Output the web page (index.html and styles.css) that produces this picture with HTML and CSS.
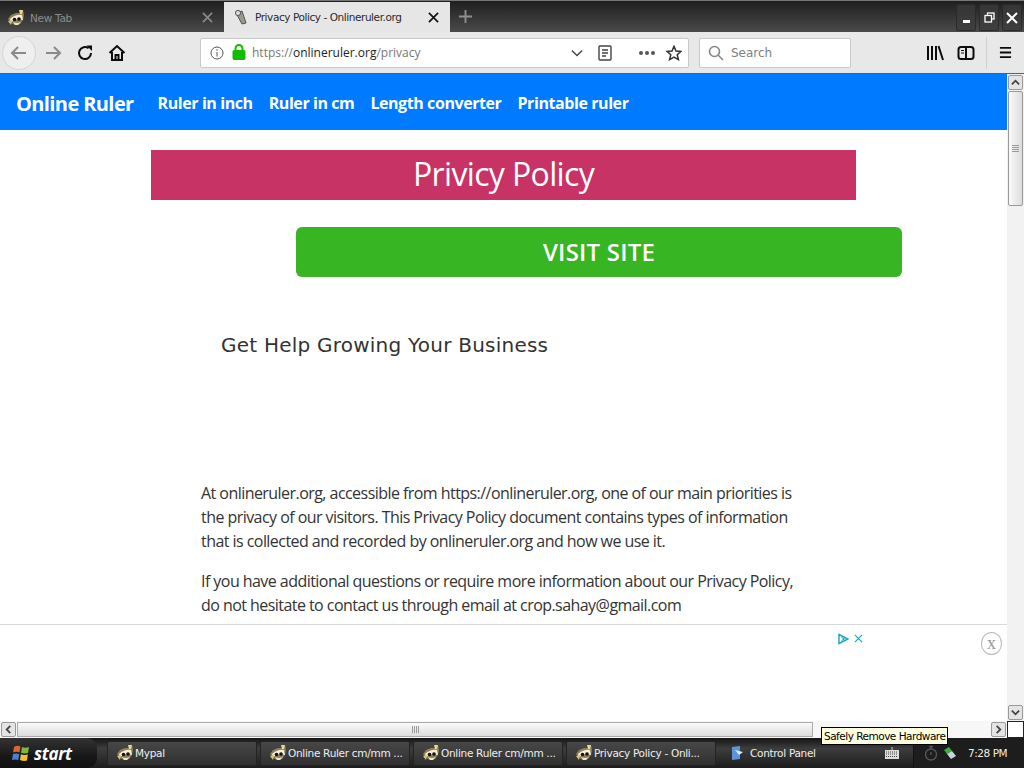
FILE: index.html
```html
<!DOCTYPE html>
<html lang="en">

<head>
  <meta charset="UTF-8">
  <title>Privacy Policy - Onlineruler.org</title>
  <link rel="stylesheet" href="styles.css">
</head>

<body>
  <svg class="defs" width="0" height="0">
    <symbol id="mypal" viewBox="0 0 16 16">
      <path d="M0 9 L3 5 L8 3 L12 3 L15 0 L16 5 L15 10 L12 14 L7 15 L3 13 Z" fill="#8f7f58" />
      <path d="M2 9 Q8 4 14 5 L15 10 Q8 8 3 12 Z" fill="#f4eeda" />
      <circle cx="6.500" cy="9.500" r="1.800" fill="#14120d" />
      <circle cx="11" cy="9" r="1.800" fill="#14120d" />
      <path d="M5 12 Q9 14 13 12 L10 15 L7 15 Z" fill="#efe7cc" />
      <path d="M11 0 L15 0 L14 4 L12 4 Z" fill="#e8d98f" />
      <path d="M0 11 L4 10 L3 15 Z" fill="#d6c484" />
    </symbol>
  </svg>

  <div class="tabbar">
    <div class="tab">
      <svg class="favicon"><use href="#mypal" /></svg>
      <span class="tab-title">New Tab</span>
      <svg class="tab-close" viewBox="0 0 12 12"><path d="M1 1 L11 11 M11 1 L1 11" /></svg>
    </div>
    <div class="tab tab-active">
      <svg class="favicon" viewBox="0 0 16 16">
        <path d="M3 4 L9 2 L13 14 L9 15 Z" fill="#9a9a92" stroke="#55554f" />
        <circle cx="5" cy="4" r="2.600" fill="#dcdcd4" stroke="#55554f" />
      </svg>
      <span class="tab-title">Privacy Policy - Onlineruler.org</span>
      <svg class="tab-close" viewBox="0 0 12 12"><path d="M1 1 L11 11 M11 1 L1 11" /></svg>
    </div>
    <svg class="new-tab" viewBox="0 0 16 16"><path d="M8 1 V15 M1 8 H15" /></svg>
    <div class="window-buttons">
      <div class="win-btn"><span class="win-min"></span></div>
      <div class="win-btn">
        <svg width="11" height="11" viewBox="0 0 11 11" fill="none" stroke="#fff" stroke-width="1.300">
          <rect x="3.500" y="1" width="6.500" height="6" />
          <rect x="1" y="3.500" width="6.500" height="6.500" fill="#383838" />
        </svg>
      </div>
      <div class="win-btn">
        <svg width="12" height="12" viewBox="0 0 12 12" stroke="#fff" stroke-width="2"><path d="M1 1 L11 11 M11 1 L1 11" /></svg>
      </div>
    </div>
  </div>

  <div class="toolbar">
    <div class="back-btn">
      <svg class="tool-icon" viewBox="0 0 18 18" stroke="#8a8a8a"><path d="M16 9 H2 M8 3 L2 9 L8 15" /></svg>
    </div>
    <svg class="tool-icon forward" viewBox="0 0 18 18" stroke="#8a8a8a"><path d="M2 9 H16 M10 3 L16 9 L10 15" /></svg>
    <svg class="tool-icon reload" viewBox="0 0 18 18" stroke="#0c0c0c"><path d="M15 9 A6 6 0 1 1 12.600 4.200" /><path class="solid" d="M10.500 1.500 H16 V7 Z" /></svg>
    <svg class="tool-icon home" viewBox="0 0 18 18" stroke="#0c0c0c"><path d="M1.500 9 L9 2 L16.500 9" /><path d="M4 8 V16 H14 V8" /><path d="M7.500 16 V11 H10.500 V16" /></svg>

    <div class="urlbar">
      <svg class="url-info" viewBox="0 0 14 14"><circle cx="7" cy="7" r="6" /><path d="M7 6 V10.500 M7 3.200 V4.800" /></svg>
      <svg class="url-lock" viewBox="0 0 14 16"><path d="M3.500 7 V4.500 A3.500 3.500 0 0 1 10.500 4.500 V7" /><rect x="1" y="6.500" width="12" height="9" rx="1" /></svg>
      <span class="url-text">https://<b>onlineruler.org</b>/privacy</span>
      <svg class="url-chevron" viewBox="0 0 14 8"><path d="M1 1 L7 7 L13 1" /></svg>
      <svg class="url-reader" viewBox="0 0 14 16"><rect x="1" y="1" width="12" height="14" rx="1" /><path d="M4 5 H10 M4 8 H10 M4 11 H8" /></svg>
      <span class="url-dots"><i></i><i></i><i></i></span>
      <svg class="url-star" viewBox="0 0 16 16"><path d="M8 1.300 L10 6 L15 6.400 L11.200 9.700 L12.400 14.600 L8 12 L3.600 14.600 L4.800 9.700 L1 6.400 L6 6 Z" /></svg>
    </div>

    <div class="searchbar">
      <svg class="search-icon" viewBox="0 0 16 16"><circle cx="6.500" cy="6.500" r="5" /><path d="M10 10 L15 15" /></svg>
      <span>Search</span>
    </div>

    <svg class="tool-icon library" viewBox="0 0 18 16" stroke="#0c0c0c"><path d="M2 1 V15 M6 1 V15 M10 1 V15 M12.500 1 L17 15" /></svg>
    <svg class="tool-icon sidebar" viewBox="0 0 18 16" stroke="#0c0c0c"><rect x="1.500" y="2" width="15" height="12" rx="2.500" /><path d="M9 2 V14" /><path d="M4 5.500 H7 M4 8 H7" stroke-width="1" /></svg>
    <div class="toolbar-sep"></div>
    <svg class="tool-icon hamburger" viewBox="0 0 14 14" stroke="#0c0c0c"><path d="M1 2 H13 M1 7 H13 M1 12 H13" /></svg>
  </div>

  <div class="viewport">
    <div class="page-row">
      <div class="page">
        <nav class="navbar">
          <a class="brand">Online Ruler</a>
          <a>Ruler in inch</a>
          <a>Ruler in cm</a>
          <a>Length converter</a>
          <a>Printable ruler</a>
        </nav>
        <h1 class="title-banner">Privicy Policy</h1>
        <a class="visit-btn">VISIT SITE</a>
        <h3 class="ad-heading">Get Help Growing Your Business</h3>
        <div class="policy">
          <p>At onlineruler.org, accessible from https://onlineruler.org, one of our main priorities is the privacy of our visitors. This Privacy Policy document contains types of information that is collected and recorded by onlineruler.org and how we use it.</p>
          <p>If you have additional questions or require more information about our Privacy Policy, do not hesitate to contact us through email at crop.sahay@gmail.com</p>
        </div>
        <div class="ad-bar">
          <svg class="adchoice" viewBox="0 0 12 12"><path d="M2 1.500 L11 6 L2 10.500 Z" /><path d="M4.500 4.500 L7.500 6 L4.500 7.500" stroke-width="1" /></svg>
          <svg class="adclose" viewBox="0 0 10 10"><path d="M1 1 L9 9 M9 1 L1 9" /></svg>
          <span class="ad-dismiss">x</span>
        </div>
      </div>
      <div class="vscroll">
        <div class="scroll-btn"><svg viewBox="0 0 10 8"><path d="M1 6 L5 2 L9 6" /></svg></div>
        <div class="vthumb"><span></span><span></span><span></span><span></span></div>
        <div class="vtrack"></div>
        <div class="scroll-btn"><svg viewBox="0 0 10 8"><path d="M1 2 L5 6 L9 2" /></svg></div>
      </div>
    </div>
    <div class="hscroll">
      <div class="scroll-btn"><svg viewBox="0 0 8 10"><path d="M6 1 L2 5 L6 9" /></svg></div>
      <div class="hthumb"><span></span><span></span><span></span><span></span></div>
      <div class="htrack"></div>
      <div class="scroll-btn"><svg viewBox="0 0 8 10"><path d="M2 1 L6 5 L2 9" /></svg></div>
      <div class="scroll-corner"></div>
    </div>
  </div>

  <div class="taskbar">
    <div class="start">
      <svg class="flag" viewBox="0 0 18 18">
        <path d="M2 3 Q5 1 8.500 2.500 L7.500 8.500 Q4.500 7 1 8.500 Z" fill="#e2622e" />
        <path d="M10 3 Q13 4.500 17 3 L16 9 Q12.500 10 9 8.800 Z" fill="#7fb93c" />
        <path d="M1 10 Q4 8.800 7.300 10 L6.300 16 Q3 15 0 16 Z" fill="#4a7fd6" />
        <path d="M8.800 10.300 Q12 11.500 15.800 10.500 L15 16.500 Q11.500 17.500 8 16 Z" fill="#f2c32e" />
      </svg>
      <span>start</span>
    </div>
    <div class="task task-mypal"><svg class="favicon"><use href="#mypal" /></svg><span>Mypal</span></div>
    <div class="task"><svg class="favicon"><use href="#mypal" /></svg><span>Online Ruler cm/mm ...</span></div>
    <div class="task"><svg class="favicon"><use href="#mypal" /></svg><span>Online Ruler cm/mm ...</span></div>
    <div class="task"><svg class="favicon"><use href="#mypal" /></svg><span>Privacy Policy - Onli...</span></div>
    <div class="task task-panel">
      <svg class="favicon" viewBox="0 0 16 16"><path d="M3 2 L11 1 V14 L3 15 Z" fill="#5f93d8" /><path d="M6 5 L14 7 L10 10 Z" fill="#dfe9f6" /></svg>
      <span>Control Panel</span>
    </div>
    <svg class="keyboard" viewBox="0 0 14 12"><rect x="0" y="3" width="14" height="9" fill="#ddd" /><path d="M1 5 H13 M1 7 H13 M1 9.500 H13" stroke="#444" stroke-dasharray="1 1" /><path d="M7 3 V0" stroke="#ccc" /></svg>
    <div class="tray">
      <svg class="tray-timer" viewBox="0 0 14 16"><circle cx="7" cy="9.500" r="5.500" /><path d="M5 1.500 H9 M7 2 V4 M7 7 V10" /></svg>
      <svg class="tray-usb" viewBox="0 0 14 14"><path d="M1 4 L6 1 L9 5 L4 8 Z" fill="#3cae3c" /><path d="M4 8 L9 5 L13 10 L8 13 Z" fill="#c9d3dc" /></svg>
      <span class="clock">7:28 PM</span>
    </div>
  </div>

  <div class="tooltip">Safely Remove Hardware</div>
</body>

</html>
```

FILE: styles.css
```css
body,
html {
  height: 100%;
  margin: 0;
  overflow: hidden;
}

body {
  display: flex;
  flex-direction: column;
  position: relative;
  font-family: "Open Sans", sans-serif;
  background-color: #fff;
}

.defs {
  position: absolute;
}

svg {
  display: block;
  flex: none;
}

.favicon {
  width: 16px;
  height: 16px;
}

/* tabs */
.tabbar {
  display: flex;
  height: 32px;
  flex: none;
  box-sizing: border-box;
  padding-top: 2px;
  border-top: 1px solid #777;
  background: linear-gradient(#1e1e1e, #2c2c2c 30%, #4a4a4a);
}

.tab {
  display: flex;
  align-items: center;
  width: 224px;
  box-sizing: border-box;
  padding: 0 11px 0 8px;
  color: #8c8c8c;
  font: 10.5px "DejaVu Sans", sans-serif;
  letter-spacing: -0.3px;
}

.tab-active {
  width: 226px;
  margin-top: -1px;
  padding-left: 9px;
  background-color: #e6e6e6;
  color: #2a2a2a;
}

.tab-title {
  flex: 1;
  margin-left: 6px;
  white-space: nowrap;
}

.tab-active .tab-title {
  letter-spacing: -0.43px;
}

.tab-close {
  width: 11px;
  height: 11px;
  stroke: #8a8a8a;
  stroke-width: 1.8;
}

.tab-active .tab-close {
  stroke: #111;
}

.new-tab {
  width: 15px;
  height: 15px;
  margin: 6px 0 0 8px;
  stroke: #8f8f8f;
  stroke-width: 2;
}

.window-buttons {
  display: flex;
  gap: 3px;
  margin-left: auto;
  padding-right: 2px;
  height: 27px;
  margin-top: 1px;
}

.win-btn {
  display: flex;
  align-items: center;
  justify-content: center;
  width: 20px;
  background: linear-gradient(#353535, #3f3f3f);
  border: 1px solid #2a2a2a;
  border-radius: 2px;
  box-sizing: border-box;
}

.win-min {
  width: 7px;
  height: 3px;
  margin-top: 7px;
  background-color: #fff;
}

/* nav toolbar */
.toolbar {
  display: flex;
  align-items: center;
  height: 41px;
  flex: none;
  box-sizing: border-box;
  background-color: #e8e8e8;
}

.tool-icon {
  width: 18px;
  height: 18px;
  fill: none;
  stroke-width: 2;
}

.tool-icon .solid {
  fill: #0c0c0c;
  stroke: none;
}

.back-btn {
  display: flex;
  align-items: center;
  justify-content: center;
  width: 32px;
  height: 32px;
  margin-left: 2px;
  border: 1px solid #d4d4d4;
  border-radius: 50%;
  background-color: #efefef;
}

.forward {
  margin-left: 8px;
}

.reload {
  margin-left: 14px;
}

.home {
  margin-left: 14px;
}

.urlbar {
  display: flex;
  align-items: center;
  width: 489px;
  height: 30px;
  margin-left: 74px;
  box-sizing: border-box;
  border: 1px solid #c8c8c8;
  border-radius: 2px;
  background-color: #fff;
  font: 12px "Open Sans", sans-serif;
  color: #777;
}

.url-text b {
  font-weight: normal;
  color: #222;
}

.url-text {
  margin-left: 6px;
  flex: 1;
}

.url-info {
  width: 14px;
  height: 14px;
  margin-left: 9px;
  fill: none;
  stroke: #555;
}

.url-lock {
  width: 14px;
  height: 16px;
  margin-left: 8px;
  margin-top: -1px;
  fill: #12bc00;
  stroke: #12bc00;
}

.url-lock path {
  fill: none;
  stroke-width: 2;
}

.url-chevron {
  width: 12px;
  height: 8px;
  fill: none;
  stroke: #444;
  stroke-width: 1.6;
}

.url-reader {
  width: 14px;
  height: 16px;
  margin-left: 15px;
  fill: none;
  stroke: #444;
  stroke-width: 1.4;
}

.url-dots {
  display: flex;
  gap: 2px;
  margin-left: 27px;
}

.url-dots i {
  width: 4px;
  height: 4px;
  border-radius: 50%;
  background-color: #555;
}

.url-star {
  width: 16px;
  height: 16px;
  margin: 0 6px 0 11px;
  fill: none;
  stroke: #333;
  stroke-width: 1.5;
}

.searchbar {
  display: flex;
  align-items: center;
  width: 152px;
  height: 30px;
  margin-left: 10px;
  box-sizing: border-box;
  border: 1px solid #c8c8c8;
  border-radius: 2px;
  background-color: #fff;
  color: #808080;
  font: 12px "DejaVu Sans", sans-serif;
}

.search-icon {
  width: 16px;
  height: 16px;
  margin: 0 7px 0 8px;
  fill: none;
  stroke: #888;
  stroke-width: 1.6;
}

.library {
  margin-left: 75px;
}

.sidebar {
  margin-left: 13px;
}

.toolbar-sep {
  width: 1px;
  height: 32px;
  margin-left: 11px;
  background-color: #d0d0d0;
}

.hamburger {
  width: 13px;
  height: 13px;
  margin-left: 12px;
}

/* page area */
.viewport {
  flex: 1;
  display: flex;
  flex-direction: column;
  min-height: 0;
  border-top: 1px solid #0a6fd8;
}

.page-row {
  flex: 1;
  display: flex;
  min-height: 0;
}

.page {
  flex: 1;
  position: relative;
  overflow: hidden;
  color: #333;
}

.navbar {
  display: flex;
  align-items: center;
  gap: 16px;
  height: 54px;
  padding: 2px 0 0 16px;
  background-color: #007bff;
  color: #fff;
  font: bold 16px "Open Sans", sans-serif;
  letter-spacing: -0.42px;
}

.brand {
  margin-right: 8px;
  font-size: 20px;
  letter-spacing: -0.6px;
}

.title-banner {
  width: 705px;
  height: 50px;
  margin: 20px 0 0 151px;
  background-color: #c73364;
  color: #fff;
  font: normal 32px/48px "Open Sans", sans-serif;
  letter-spacing: -0.64px;
  text-align: center;
}

.visit-btn {
  display: block;
  width: 606px;
  height: 50px;
  margin: 27px 0 0 296px;
  border-radius: 6px;
  background-color: #38b522;
  color: #fff;
  font: 600 24px/50px "Open Sans", sans-serif;
  letter-spacing: 0.2px;
  text-align: center;
}

.ad-heading {
  margin: 53px 0 0 221px;
  font: normal 20px/30px "DejaVu Sans", sans-serif;
  letter-spacing: 0.23px;
}

.policy {
  width: 610px;
  margin: 121px 0 0 201px;
  font-size: 16px;
  line-height: 24px;
  letter-spacing: -0.55px;
}

.policy p {
  margin: 0 0 16px;
}

.ad-bar {
  position: absolute;
  left: 0;
  right: 0;
  bottom: 0;
  height: 96px;
  border-top: 1px solid #d9d9d9;
  background-color: #fff;
}

.adchoice {
  position: absolute;
  left: 837px;
  top: 8px;
  width: 12px;
  height: 12px;
  fill: none;
  stroke: #14a5c5;
  stroke-width: 1.4;
}

.adclose {
  position: absolute;
  left: 854px;
  top: 9px;
  width: 9px;
  height: 9px;
  stroke: #14a5c5;
  stroke-width: 1.2;
}

.ad-dismiss {
  position: absolute;
  left: 981px;
  top: 7px;
  width: 19px;
  height: 21px;
  border: 1px solid #bbb;
  border-radius: 50%;
  color: #999;
  font: 18px/20px "Liberation Serif", serif;
  text-align: center;
}

/* scrollbars */
.vscroll {
  display: flex;
  flex-direction: column;
  width: 17px;
  flex: none;
  background-color: #f2f2f2;
}

.scroll-btn {
  display: flex;
  align-items: center;
  justify-content: center;
  width: 15px;
  height: 15px;
  margin: 1px;
  flex: none;
  box-sizing: border-box;
  border: 1px solid #999;
  border-radius: 2px;
  background-color: #e4e4e4;
}

.scroll-btn svg {
  width: 9px;
  height: 9px;
  fill: none;
  stroke: #444;
  stroke-width: 2;
}

.vthumb {
  display: flex;
  flex-direction: column;
  align-items: center;
  justify-content: center;
  gap: 1px;
  height: 115px;
  margin: 0 1px;
  box-sizing: border-box;
  border: 1px solid #999;
  border-radius: 2px;
  background: linear-gradient(90deg, #fafafa, #dcdcdc);
}

.vthumb span {
  width: 7px;
  height: 1px;
  background-color: #999;
}

.vtrack,
.htrack {
  flex: 1;
}

.hscroll {
  display: flex;
  align-items: center;
  height: 17px;
  flex: none;
  background-color: #f7f7f7;
}

.hthumb {
  display: flex;
  align-items: center;
  justify-content: center;
  gap: 1px;
  width: 796px;
  height: 15px;
  box-sizing: border-box;
  border: 1px solid #aaa;
  background: linear-gradient(#fafafa, #dcdcdc);
}

.hthumb span {
  width: 1px;
  height: 7px;
  background-color: #999;
}

.scroll-corner {
  width: 15px;
  height: 15px;
  border: 1px solid #222;
  background-color: #fff;
}

/* taskbar */
.taskbar {
  display: flex;
  align-items: center;
  height: 30px;
  flex: none;
  background: linear-gradient(#151515, #3d3d3d 35%, #1c1c1c);
  color: #eee;
  font: 10.5px "DejaVu Sans", sans-serif;
  letter-spacing: -0.3px;
}

.start {
  display: flex;
  align-items: center;
  gap: 4px;
  width: 97px;
  height: 30px;
  box-sizing: border-box;
  padding-left: 12px;
  border-radius: 0 10px 10px 0;
  background: linear-gradient(#333, #181818 60%, #101010);
  color: #fff;
  font: italic bold 17px "Open Sans", sans-serif;
}

.flag {
  width: 18px;
  height: 18px;
}

.task {
  display: flex;
  align-items: center;
  gap: 2px;
  width: 150px;
  height: 25px;
  margin-left: 3px;
  box-sizing: border-box;
  padding-left: 9px;
  border: 1px solid #232323;
  border-radius: 2px;
  background: linear-gradient(#474747, #303030);
  white-space: nowrap;
}

.task-mypal {
  margin-left: 10px;
}

.task-panel {
  gap: 5px;
  width: 150px;
  border-color: transparent;
  background: none;
}

.keyboard {
  width: 14px;
  height: 12px;
  margin-left: 16px;
}

.tray {
  display: flex;
  align-items: center;
  height: 30px;
  margin-left: 14px;
  padding: 0 0 0 10px;
  flex: 1;
  border-left: 1px solid #111;
  background-color: #1d1d1d;
}

.tray-timer {
  width: 14px;
  height: 16px;
  fill: none;
  stroke: #555;
  stroke-width: 1.4;
}

.tray-usb {
  width: 14px;
  height: 14px;
  margin-left: 5px;
}

.clock {
  margin-left: 11px;
  letter-spacing: -0.45px;
  white-space: nowrap;
}

.tooltip {
  position: absolute;
  left: 821px;
  top: 727px;
  height: 16px;
  padding: 0 2px;
  border: 1px solid #000;
  background-color: #ffffe1;
  color: #000;
  font: 10.5px/16px "DejaVu Sans", sans-serif;
  letter-spacing: -0.5px;
  white-space: nowrap;
}
```
